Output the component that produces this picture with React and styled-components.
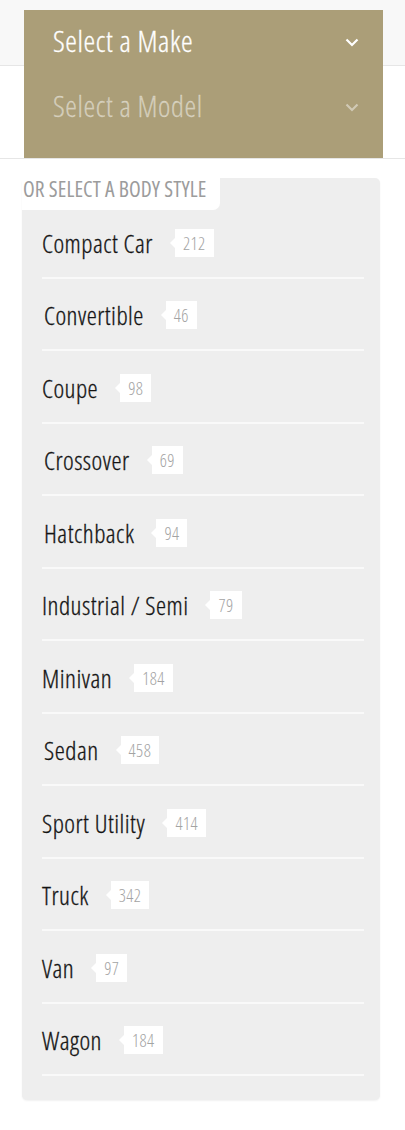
import React from "react";
import styled, { createGlobalStyle } from "styled-components";

const GlobalStyle = createGlobalStyle`
  html, body {
    margin: 0;
    padding: 0;
    background: #ffffff;
  }
  body {
    font-family: "Open Sans", "DejaVu Sans", sans-serif;
    font-stretch: 75%;
    font-weight: 300;
  }
`;

const BODY_STYLES = [
  { name: "Compact Car", count: 212 },
  { name: "Convertible", count: 46, nudge: 2 },
  { name: "Coupe", count: 98 },
  { name: "Crossover", count: 69, nudge: 2 },
  { name: "Hatchback", count: 94, nudge: 2 },
  { name: "Industrial / Semi", count: 79 },
  { name: "Minivan", count: 184 },
  { name: "Sedan", count: 458, nudge: 2 },
  { name: "Sport Utility", count: 414 },
  { name: "Truck", count: 342 },
  { name: "Van", count: 97 },
  { name: "Wagon", count: 184 },
];

const Page = styled.div`
  width: 405px;
  min-height: 1130px;
`;

const Header = styled.header`
  height: 148px;
  padding: 10px 0 0 24px;
  border-bottom: 1px solid #e6e6e6;
  background: linear-gradient(
    #f8f8f8 0 65px,
    #e6e6e6 65px 66px,
    #ffffff 66px 100%
  );
`;

const Selects = styled.div`
  width: 359px;
  height: 148px;
  box-sizing: border-box;
  background: #ab9e78;
  display: flex;
  flex-direction: column;
`;

const SelectRow = styled.div`
  height: 65px;
  box-sizing: border-box;
  padding: 0 24px 4px 29px;
  display: flex;
  align-items: center;
  justify-content: space-between;
  color: ${(p) => (p.$muted ? "rgba(255,255,255,0.45)" : "#ffffff")};
  font-size: 29.5px;
  letter-spacing: 0.6px;
  -webkit-text-stroke: 0.3px currentColor;
`;

const Chevron = ({ muted }) => (
  <svg width="14" height="9" viewBox="0 0 14 9" style={{ opacity: muted ? 0.45 : 1, marginTop: 3 }}>
    <path d="M1.5 1.5 L7 7 L12.5 1.5" fill="none" stroke="#fff" strokeWidth="2.2" />
  </svg>
);

const Section = styled.section`
  padding: 19px 25px 28px 22px;
`;

const Card = styled.div`
  position: relative;
  background: #eeeeee;
  border-radius: 5px;
  padding: 28px 16px 24px 20px;
  box-shadow: 0 1px 2px rgba(0, 0, 0, 0.06);
`;

const Label = styled.div`
  position: absolute;
  top: 0;
  left: 0;
  width: 198px;
  height: 32px;
  background: #ffffff;
  border-bottom-right-radius: 7px;
  color: #9c9c9c;
  font-size: 21.5px;
  font-weight: 400;
  letter-spacing: 0.1px;
  text-transform: uppercase;
  line-height: 22px;
  white-space: nowrap;
  padding-left: 1px;
  box-sizing: border-box;
`;

const List = styled.ul`
  list-style: none;
  margin: 0;
  padding: 0;
`;

const Row = styled.li`
  height: 67.5px;
  padding-top: 3px;
  border-bottom: 2px solid #f9f9f9;
  display: flex;
  align-items: center;
`;

const Name = styled.span`
  color: #141414;
  font-size: 25.5px;
  letter-spacing: 0.5px;
  -webkit-text-stroke: 0.3px currentColor;
  margin-left: ${(p) => p.$nudge || 0}px;
`;

const Count = styled.span`
  position: relative;
  margin-left: 22px;
  height: 28px;
  padding: 0 8px;
  display: inline-flex;
  align-items: center;
  background: #ffffff;
  color: #a3a3a3;
  font-size: 17.5px;
  letter-spacing: 0.4px;

  &:before {
    content: "";
    position: absolute;
    left: -5px;
    top: 9px;
    border-top: 5px solid transparent;
    border-bottom: 5px solid transparent;
    border-right: 5px solid #ffffff;
  }
`;

export default function App() {
  return (
    <Page>
      <GlobalStyle />
      <Header>
        <Selects>
          <SelectRow>
            <span>Select a Make</span>
            <Chevron />
          </SelectRow>
          <SelectRow $muted>
            <span>Select a Model</span>
            <Chevron muted />
          </SelectRow>
        </Selects>
      </Header>
      <Section>
        <Card>
          <Label>Or select a body style</Label>
          <List>
            {BODY_STYLES.map((b) => (
              <Row key={b.name}>
                <Name $nudge={b.nudge}>{b.name}</Name>
                <Count>{b.count}</Count>
              </Row>
            ))}
          </List>
        </Card>
      </Section>
    </Page>
  );
}
